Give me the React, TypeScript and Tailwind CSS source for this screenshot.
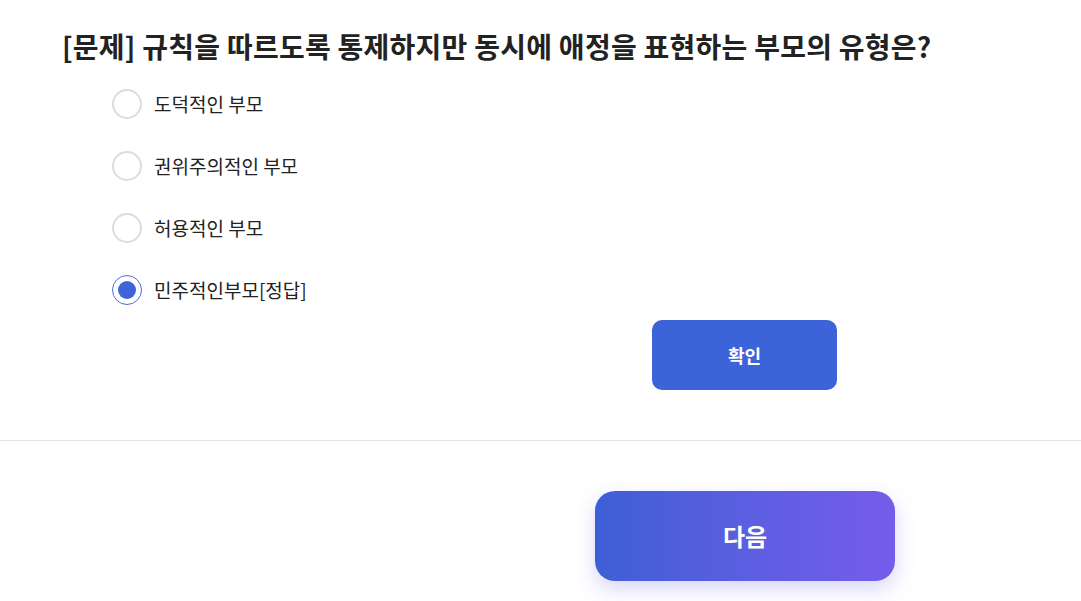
import React, { useState } from "react";

const options = ["도덕적인 부모", "권위주의적인 부모", "허용적인 부모", "민주적인부모[정답]"];

export default function App() {
  const [sel, setSel] = useState(3);
  return (
    <div
      className="w-[1081px] h-[601px] bg-white overflow-hidden text-[#222]"
      style={{ fontFamily: '"Noto Sans CJK KR", "Noto Sans", sans-serif' }}
    >
      <div className="pt-[26px] pl-[62px]">
        <h1 className="text-[28px] font-bold leading-[40px] tracking-[0.25px] text-[#222] whitespace-nowrap">
          [문제] 규칙을 따르도록 통제하지만 동시에 애정을 표현하는 부모의 유형은?
        </h1>
      </div>
      <div className="pl-[112px] pt-[23px] flex flex-col gap-[32px]">
        {options.map((o, i) => (
          <label key={o} className="flex items-center gap-[12px] h-[30px] cursor-pointer" onClick={() => setSel(i)}>
            {sel === i ? (
              <span className="w-[30px] h-[30px] rounded-full border-[1.5px] border-[#4a6ee0] flex items-center justify-center">
                <span className="w-[18px] h-[18px] rounded-full bg-[#3f63d9]" />
              </span>
            ) : (
              <span className="w-[30px] h-[30px] rounded-full border-2 border-[#dcdcdc]" />
            )}
            <span className="text-[19px] text-[#222]">{o}</span>
          </label>
        ))}
      </div>
      <div className="pl-[652px] pt-[15px]">
        <button className="w-[185px] h-[70px] rounded-[10px] bg-[#3d63d8] text-white text-[18px] font-bold">
          확인
        </button>
      </div>
      <div className="mt-[50px] h-px bg-[#e3e3e3]" />
      <div className="pl-[595px] pt-[50px]">
        <button className="w-[300px] h-[90px] rounded-[20px] bg-gradient-to-r from-[#3d5fd6] to-[#755ceb] text-white text-[24px] font-bold shadow-[0_8px_20px_rgba(100,90,230,0.25)]">
          다음
        </button>
      </div>
    </div>
  );
}
